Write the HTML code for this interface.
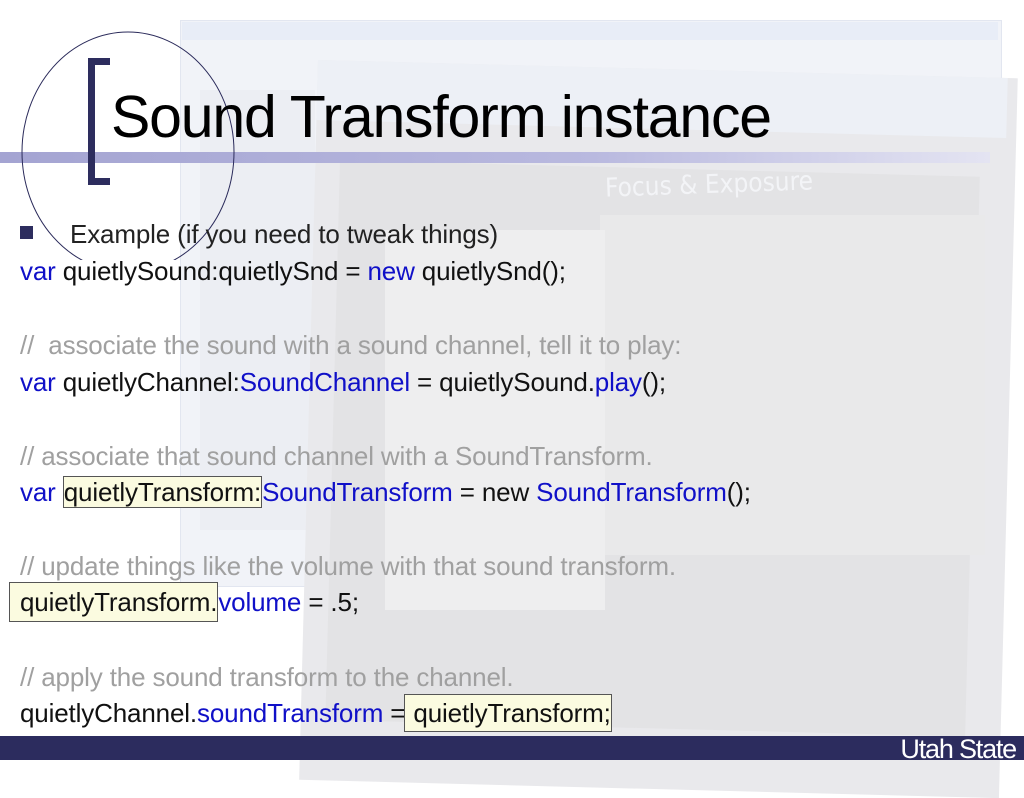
<!DOCTYPE html>
<html><head><meta charset="utf-8"><style>
html,body{margin:0;padding:0}
body{width:1024px;height:768px;position:relative;overflow:hidden;background:#fff;font-family:"Liberation Sans",Arial,sans-serif}
.a{position:absolute}
.t{position:absolute;left:20px;font-size:26px;white-space:nowrap;letter-spacing:-0.15px;color:#111}
.c{color:#a0a0a0}
.b{color:#1010c8}
.h{background:#fbfbe0;border:1px solid #555;}
</style></head><body>
<div class="a" style="left:180px;top:20px;width:820px;height:565px;background:#f1f3f8;border:1px solid #e2e6f0"></div>
<div class="a" style="left:182px;top:22px;width:816px;height:18px;background:#e8edf7"></div>
<div class="a" style="left:200px;top:90px;width:115px;height:440px;background:#eceef3"></div>
<div class="a" style="left:318px;top:60px;width:700px;height:720px;background:#e9e9ec;transform:rotate(1.5deg);transform-origin:0 0"></div>
<div class="a" style="left:318px;top:60px;width:690px;height:60px;background:#edf0f6;transform:rotate(1.5deg);transform-origin:0 0"></div>
<div class="a" style="left:340px;top:160px;width:640px;height:560px;background:#e3e3e5;transform:rotate(1.5deg);transform-origin:0 0"></div>
<div class="a" style="left:600px;top:215px;width:385px;height:340px;background:#e9e9ea"></div>
<div class="a" style="left:385px;top:230px;width:220px;height:380px;background:#eeeeef"></div>
<div class="a" style="left:605px;top:170px;color:#f3f4f7;font-size:26px;font-family:'DejaVu Sans Condensed','Liberation Sans',sans-serif;transform:rotate(-2deg)">Focus &amp; Exposure</div>
<div class="a" style="left:0;top:152px;width:990px;height:11px;background:linear-gradient(90deg,#a4a4d2,#b9b9df 60%,#e4e4f2)"></div>
<svg class="a" style="left:0;top:0" width="300" height="260"><ellipse cx="128" cy="152" rx="106" ry="120" fill="none" stroke="#2a2a5a" stroke-width="1"/></svg>
<div class="a" style="left:88px;top:58px;width:7px;height:127px;background:#2d2d5e"></div>
<div class="a" style="left:88px;top:58px;width:22px;height:7px;background:#2d2d5e"></div>
<div class="a" style="left:88px;top:178px;width:22px;height:7px;background:#2d2d5e"></div>
<div class="a" style="left:111px;top:83px;font-size:59px;color:#000;letter-spacing:-1.2px;white-space:nowrap">Sound Transform instance</div>
<div class="a" style="left:20px;top:226px;width:13px;height:13px;background:#2d2d5e"></div>
<div class="t" style="left:70px;top:219px;color:#222">Example (if you need to tweak things)</div>
<div class="t" style="top:256px"><span class="b">var</span> quietlySound:quietlySnd = <span class="b">new</span> quietlySnd();</div>
<div class="t c" style="top:330px">//&nbsp; associate the sound with a sound channel, tell it to play:</div>
<div class="t" style="top:367px"><span class="b">var</span> quietlyChannel:<span class="b">SoundChannel</span> = quietlySound.<span class="b">play</span>();</div>
<div class="t c" style="top:441px">// associate that sound channel with a SoundTransform.</div>
<div class="t" style="top:477px"><span class="b">var</span> <span class="h">quietlyTransform:</span><span class="b">SoundTransform</span> = new <span class="b">SoundTransform</span>();</div>
<div class="t c" style="top:551px">// update things like the volume with that sound transform.</div>
<div class="t" style="top:587px;left:9px"><span class="h" style="padding:4px 0 4px 10px">quietlyTransform.</span><span class="b">volume</span> = .5;</div>
<div class="t c" style="top:662px">// apply the sound transform to the channel.</div>
<div class="t" style="top:698px">quietlyChannel.<span class="b">soundTransform</span> = <span class="h" style="padding:3px 0 3px 8px;margin-left:-8px">quietlyTransform;</span></div>
<div class="a" style="left:0;top:736px;width:1024px;height:24px;background:#2c2c5e"></div>
<div class="a" style="right:8px;top:734px;color:#fff;font-size:27px;line-height:30px;letter-spacing:-1.2px">Utah State</div>
</body></html>
